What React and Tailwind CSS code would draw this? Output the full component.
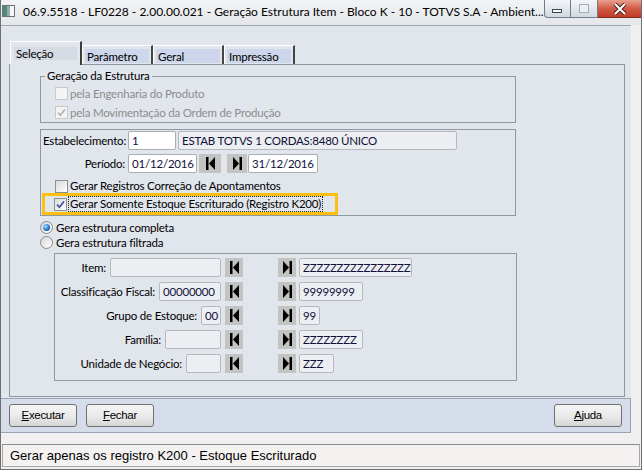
import React from 'react';

const ui = "font-['Lato','Liberation_Sans',sans-serif] text-[11.5px] tracking-[-0.2px]";

function Check({ checked, disabled }) {
  return (
    <span
      className={`inline-flex h-[13px] w-[13px] shrink-0 items-center justify-center border ${
        disabled ? 'border-[#c8c8c8] bg-[#f4f4f4]' : 'border-[#8e8f8f] bg-gradient-to-br from-[#dadada] to-white'
      }`}
    >
      {checked && (
        <svg width="9" height="9" viewBox="0 0 9 9">
          <path d="M1 4.6 L3.4 7.2 L8 1.4" fill="none" stroke={disabled ? '#b4b4b4' : '#44589a'} strokeWidth="1.7" />
        </svg>
      )}
    </span>
  );
}

function Radio({ on }) {
  return (
    <span className="inline-flex h-[13px] w-[13px] shrink-0 items-center justify-center rounded-full border border-[#8a8a8a] bg-gradient-to-br from-[#d6d6d6] to-white">
      {on && <span className="h-[7px] w-[7px] rounded-full bg-[radial-gradient(circle_at_35%_35%,#a8dcff,#2477d0_55%,#0b3f80)]" />}
    </span>
  );
}

function NavBtn({ dir, w = 'w-[18px]' }) {
  return (
    <span className={`flex h-[19px] ${w} shrink-0 items-center justify-center bg-[#c3c3c3]`}>
      <svg width="9" height="13" viewBox="0 0 9 13">
        {dir === 'first' ? (
          <>
            <rect x="0" y="0" width="2.5" height="13" fill="#000" />
            <path d="M9 0 L3 6.5 L9 13Z" fill="#000" />
          </>
        ) : (
          <>
            <path d="M0 0 L6 6.5 L0 13Z" fill="#000" />
            <rect x="6.5" y="0" width="2.5" height="13" fill="#000" />
          </>
        )}
      </svg>
    </span>
  );
}

function Field({ w, value, white }) {
  return (
    <div
      className={`h-[19px] ${w} shrink-0 overflow-hidden rounded-[2px] border px-[3px] leading-[17px] text-[#10103a] ${
        white ? 'border-[#abadb3] bg-white' : 'border-[#b4b8bf] bg-[#eceef1]'
      }`}
    >
      {value}
    </div>
  );
}

function Tab({ label, active }) {
  if (active) {
    return (
      <div className="relative z-10 -mb-px h-[24px] w-[72px] border-l border-t border-white border-r-2 border-r-[#3c3c3c] bg-[#e1e5ec] px-[3px] pt-[5px]">
        <div className="h-[13px] bg-[#d5dae3] pl-[2px] leading-[13px]">{label}</div>
      </div>
    );
  }
  return (
    <div className="h-[19px] w-[71px] border-l border-t border-white border-r-2 border-r-[#454545] px-[2px] pt-[3px]">
      <div className="h-[14px] bg-[#cdd6ea] pl-[2px] leading-[15px]">{label}</div>
    </div>
  );
}

const filterRows = [
  { label: 'Item:', w: 'w-[111px]', from: '', tw: 'w-[113px]', to: 'ZZZZZZZZZZZZZZZZ' },
  { label: 'Classificação Fiscal:', w: 'w-[62px]', from: '00000000', tw: 'w-[64px]', to: '99999999' },
  { label: 'Grupo de Estoque:', w: 'w-[20px]', from: '00', tw: 'w-[21px]', to: '99' },
  { label: 'Família:', w: 'w-[56px]', from: '', tw: 'w-[64px]', to: 'ZZZZZZZZ' },
  { label: 'Unidade de Negócio:', w: 'w-[35px]', from: '', tw: 'w-[35px]', to: 'ZZZ' },
];

function WinButton({ label }) {
  return (
    <button className="h-[23px] w-[68px] rounded-[3px] border border-[#707070] bg-gradient-to-b from-[#f4f4f4] via-[#ebebeb] to-[#d6d6d6] font-['Liberation_Sans',sans-serif] text-[11.5px] tracking-[-0.3px] text-black">
      <span className="underline">{label[0]}</span>
      {label.slice(1)}
    </button>
  );
}

export default function App() {
  return (
    <div className={`${ui} relative h-[470px] w-[642px] overflow-hidden whitespace-nowrap border-x border-b border-[#6f6f6f] bg-[#f0f0f0] text-black`}>
      {/* title bar */}
      <div className="flex h-[25px] items-start bg-gradient-to-b from-[#f2f3f5] to-[#e4e6e9]">
        <svg width="13" height="12" viewBox="0 0 13 12" className="ml-[1px] mt-[5px] shrink-0">
          <rect x="0.5" y="0.5" width="12" height="11" fill="#f4f6f8" stroke="#6b7179" />
          <rect x="1" y="1" width="4" height="10" fill="#4f8a72" />
          <rect x="5" y="1" width="3" height="10" fill="#9aa6b2" />
        </svg>
        <div className="ml-[8px] mt-[4px] text-[12px] leading-[15px] tracking-normal">
          06.9.5518 - LF0228 - 2.00.00.021 - Geração Estrutura Item - Bloco K - 10 - TOTVS S.A - Ambient...
        </div>
        <div className="ml-auto mr-[1px] flex h-[18px]">
          <div className="flex w-[27px] items-end justify-center rounded-bl-[4px] border border-t-0 border-[#707b88] bg-gradient-to-b from-[#f3f5f8] to-[#d3d9e1] pb-[4px]">
            <span className="h-[4px] w-[10px] border border-[#3d4450] bg-white" />
          </div>
          <div className="flex w-[27px] items-center justify-center border-b border-r border-[#707b88] bg-gradient-to-b from-[#f3f5f8] to-[#d3d9e1]">
            <span className="h-[9px] w-[10px] border border-[#a5abb3] bg-[#eceff3]" />
          </div>
          <div className="flex w-[46px] items-center justify-center rounded-br-[4px] border-b border-r border-[#7c2b21] bg-gradient-to-b from-[#e8a090] via-[#d15a45] to-[#c13a26]">
            <svg width="14" height="12" viewBox="0 0 14 12">
              <path d="M2 1 L12 11 M12 1 L2 11" stroke="#4a1d16" strokeWidth="4" />
              <path d="M2 1 L12 11 M12 1 L2 11" stroke="#ffffff" strokeWidth="2" />
            </svg>
          </div>
        </div>
      </div>

      {/* client */}
      <div className="h-[408px] w-[630px] border-t border-[#a2a8b0] bg-[#e1e5ec]">
        <div className="flex h-[38px] items-end pl-[9px]">
          <Tab label="Seleção" active />
          <Tab label="Parâmetro" />
          <Tab label="Geral" />
          <Tab label="Impressão" />
        </div>

        {/* tab panel */}
        <div className="ml-[8px] h-[333px] w-[616px] border border-[#8d97a5] pl-[30px]">
          <fieldset className="mt-[4px] h-[54px] w-[476px] border border-[#8f98a3]">
            <legend className="ml-[4px] px-[2px] leading-[14px]">Geração da Estrutura</legend>
            <div className="pl-[14px] pt-[1px] text-[#8d8d8d]">
              <div className="flex h-[19px] items-center gap-[2px]">
                <Check disabled />
                <span>pela Engenharia do Produto</span>
              </div>
              <div className="flex h-[19px] items-center gap-[2px]">
                <Check disabled checked />
                <span>pela Movimentação da Ordem de Produção</span>
              </div>
            </div>
          </fieldset>

          <div className="mt-[6px] h-[87px] w-[476px] border border-[#8f98a3] pt-[1px]">
            <div className="flex h-[19px] items-center">
              <span className="ml-[2px] w-[85px]">Estabelecimento:</span>
              <Field w="w-[48px]" value="1" white />
              <div className="ml-[2px]">
                <Field w="w-[279px]" value="ESTAB TOTVS 1 CORDAS:8480 ÚNICO" />
              </div>
            </div>
            <div className="mt-[4px] flex h-[19px] items-center">
              <span className="w-[87px] pr-[3px] text-right">Período:</span>
              <Field w="w-[69px]" value="01/12/2016" white />
              <span className="ml-[2px]">
                <NavBtn dir="first" w="w-[22px]" />
              </span>
              <span className="ml-[6px]">
                <NavBtn dir="last" w="w-[20px]" />
              </span>
              <span className="ml-[1px]">
                <Field w="w-[70px]" value="31/12/2016" white />
              </span>
            </div>
            <div className="mt-[6px] flex h-[14px] items-center gap-[2px] pl-[14px]">
              <Check />
              <span>Gerar Registros Correção de Apontamentos</span>
            </div>
            <div className="ml-[1px] flex h-[22px] w-[296px] items-center gap-[1px] border-[3px] border-[#fdc010] pl-[9px]">
              <Check checked />
              <span className="border border-dotted border-[#222] px-[1px] leading-[14px]">
                Gerar Somente Estoque Escriturado (Registro K200)
              </span>
            </div>
          </div>

          <div className="mt-[4px] flex h-[15px] items-center gap-[3px]">
            <Radio on />
            <span>Gera estrutura completa</span>
          </div>
          <div className="flex h-[15px] items-center gap-[3px]">
            <Radio />
            <span>Gera estrutura filtrada</span>
          </div>

          <div className="ml-[14px] mt-[3px] flex h-[128px] w-[463px] flex-col gap-[5px] border border-[#8f98a3] pt-[4px]">
            {filterRows.map((r) => (
              <div key={r.label} className="flex h-[19px] items-center">
                <div className="flex w-[166px] items-center justify-end gap-[4px]">
                  <span>{r.label}</span>
                  <Field w={r.w} value={r.from} />
                </div>
                <span className="ml-[4px]">
                  <NavBtn dir="first" />
                </span>
                <span className="ml-[35px]">
                  <NavBtn dir="last" />
                </span>
                <span className="ml-[3px]">
                  <Field w={r.tw} value={r.to} />
                </span>
              </div>
            ))}
          </div>
        </div>

        {/* button bar */}
        <div className="mt-[1px] flex h-[35px] items-start border-y border-r border-[#9aa3b0] bg-[#d5dcea] px-[8px] pt-[5px]">
          <WinButton label="Executar" />
          <span className="ml-[9px]">
            <WinButton label="Fechar" />
          </span>
          <span className="ml-auto">
            <WinButton label="Ajuda" />
          </span>
        </div>
      </div>

      {/* status bar */}
      <div className="mx-[1px] mt-[11px] h-[23px] border border-[#a7a7a7] border-t-[#8c8c8c] bg-[#f4f1f1] pl-[7px] font-['Liberation_Sans',sans-serif] text-[13px] leading-[21px] tracking-normal">
        Gerar apenas os registro K200 - Estoque Escriturado
      </div>
    </div>
  );
}
